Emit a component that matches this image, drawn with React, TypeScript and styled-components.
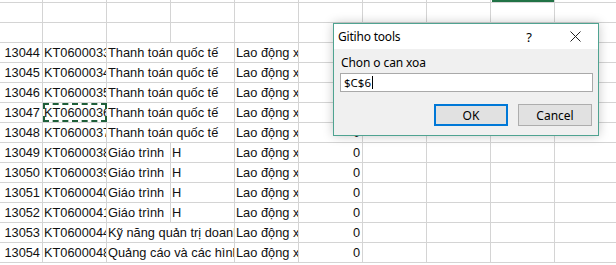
import React from "react";
import styled, { createGlobalStyle } from "styled-components";

const GlobalStyle = createGlobalStyle`
  html, body {
    margin: 0;
    padding: 0;
    background: #ffffff;
    overflow: hidden;
  }
  body {
    font-family: "Liberation Sans", Arial, sans-serif;
  }
`;

const GRID = "#d4d4d4";

const Page = styled.div`
  position: relative;
  width: 616px;
  height: 265px;
  overflow: hidden;
  background: #fff;
`;

const Sheet = styled.div`
  display: flex;
  flex-direction: column;
`;

const Row = styled.div<{ $h?: number }>`
  display: grid;
  grid-template-columns: 43px repeat(9, 64px);
  height: ${(p) => p.$h ?? 20}px;
  box-sizing: border-box;
  border-bottom: 1px solid ${GRID};
`;

const Cell = styled.div<{ $span?: number; $right?: boolean; $sel?: boolean }>`
  grid-column: span ${(p) => p.$span ?? 1};
  position: relative;
  box-sizing: border-box;
  border-right: 1px solid ${GRID};
  overflow: hidden;
  white-space: nowrap;
  font-size: 12.8px;
  line-height: 20px;
  color: #111;
  text-align: ${(p) => (p.$right ? "right" : "left")};
  padding: ${(p) => (p.$right ? "0 2px 0 0" : "0 0 0 1px")};
  ${(p) =>
    p.$sel &&
    `outline: 2px dashed #1f5f3a; outline-offset: -2px; z-index: 1;`}
`;

const Marker = styled.div`
  height: 2px;
  margin: 0 -1px 0 0;
  background: #217346;
`;

// dialog window
const Dialog = styled.div`
  position: absolute;
  left: 333px;
  top: 23px;
  width: 266px;
  height: 113px;
  box-sizing: border-box;
  border: 1px solid #4fa391;
  background: #f0f0f0;
  box-shadow: 0 0 10px rgba(0, 0, 0, 0.22);
  display: flex;
  flex-direction: column;
  font-family: "Noto Sans", "Open Sans", sans-serif;
  font-size: 12px;
  color: #000;
`;

const TitleBar = styled.div`
  height: 25px;
  background: #fff;
  display: flex;
  align-items: center;
  padding-left: 4px;
`;

const Title = styled.span`
  flex: 1;
  letter-spacing: -0.2px;
`;

const TitleBtn = styled.div<{ $w: number }>`
  width: ${(p) => p.$w}px;
  height: 25px;
  display: flex;
  align-items: center;
  justify-content: center;
  font-size: 13px;
`;

const Body = styled.div`
  flex: 1;
  display: flex;
  flex-direction: column;
  padding: 6px 5px 0 6px;
`;

const Label = styled.div`
  padding-left: 1px;
  line-height: 15px;
  letter-spacing: -0.1px;
`;

const Input = styled.div`
  margin-top: 3px;
  height: 19px;
  box-sizing: border-box;
  border: 1px solid #a9a9a9;
  background: #fff;
  display: flex;
  align-items: center;
  padding-left: 3px;
  font-size: 11.5px;
`;

const Caret = styled.span`
  display: inline-block;
  width: 1px;
  height: 13px;
  background: #000;
  margin-left: 1px;
`;

const Buttons = styled.div`
  margin-top: 12px;
  display: flex;
  justify-content: flex-end;
  gap: 10px;
  padding-right: 1px;
`;

const Btn = styled.div<{ $def?: boolean }>`
  width: 74px;
  height: 22px;
  box-sizing: border-box;
  display: flex;
  align-items: center;
  justify-content: center;
  background: #e1e1e1;
  border: ${(p) => (p.$def ? "2px solid #0078d7" : "1px solid #adadad")};
`;

type Data = { a: string; b: string; c: string; d?: string; e: string };

const rows: Data[] = [
  { a: "13044", b: "KT0600033", c: "Thanh toán quốc tế", e: "Lao động xã hội" },
  { a: "13045", b: "KT0600034", c: "Thanh toán quốc tế", e: "Lao động xã hội" },
  { a: "13046", b: "KT0600035", c: "Thanh toán quốc tế", e: "Lao động xã hội" },
  { a: "13047", b: "KT0600036", c: "Thanh toán quốc tế", e: "Lao động xã hội" },
  { a: "13048", b: "KT0600037", c: "Thanh toán quốc tế", e: "Lao động xã hội" },
  { a: "13049", b: "KT0600038", c: "Giáo trình", d: "H", e: "Lao động xã hội" },
  { a: "13050", b: "KT0600039", c: "Giáo trình", d: "H", e: "Lao động xã hội" },
  { a: "13051", b: "KT0600040", c: "Giáo trình", d: "H", e: "Lao động xã hội" },
  { a: "13052", b: "KT0600041", c: "Giáo trình", d: "H", e: "Lao động xã hội" },
  { a: "13053", b: "KT0600044", c: "Kỹ năng quản trị doanh nghiệp", e: "Lao động xã hội" },
  { a: "13054", b: "KT0600048", c: "Quảng cáo và các hình thức xúc tiến", e: "Lao động xã hội" },
];

const Empty = ({ n }: { n: number }) => (
  <>
    {Array.from({ length: n }).map((_, i) => (
      <Cell key={i} />
    ))}
  </>
);

const CloseIcon = () => (
  <svg width="11" height="11" viewBox="0 0 11 11">
    <path d="M0.5 0.5 L10.5 10.5 M10.5 0.5 L0.5 10.5" stroke="#222" strokeWidth="1" />
  </svg>
);

export default function App() {
  return (
    <Page>
      <GlobalStyle />
      <Sheet>
        <Row $h={3}>
          <Empty n={8} />
          <Cell>
            <Marker />
          </Cell>
          <Cell />
        </Row>
        <Row>
          <Empty n={10} />
        </Row>
        <Row>
          <Empty n={10} />
        </Row>
        {rows.map((r, i) => (
          <Row key={r.a}>
            <Cell $right>{r.a}</Cell>
            <Cell $sel={i === 3}>{r.b}</Cell>
            {r.d ? (
              <>
                <Cell>{r.c}</Cell>
                <Cell>{r.d}</Cell>
              </>
            ) : (
              <Cell $span={2}>{r.c}</Cell>
            )}
            <Cell>{r.e}</Cell>
            <Cell $right>0</Cell>
            <Empty n={4} />
          </Row>
        ))}
      </Sheet>

      <Dialog>
        <TitleBar>
          <Title>Gitiho tools</Title>
          <TitleBtn $w={46}>?</TitleBtn>
          <TitleBtn $w={46}>
            <CloseIcon />
          </TitleBtn>
        </TitleBar>
        <Body>
          <Label>Chon o can xoa</Label>
          <Input>
            $C$6
            <Caret />
          </Input>
          <Buttons>
            <Btn $def>OK</Btn>
            <Btn>Cancel</Btn>
          </Buttons>
        </Body>
      </Dialog>
    </Page>
  );
}
